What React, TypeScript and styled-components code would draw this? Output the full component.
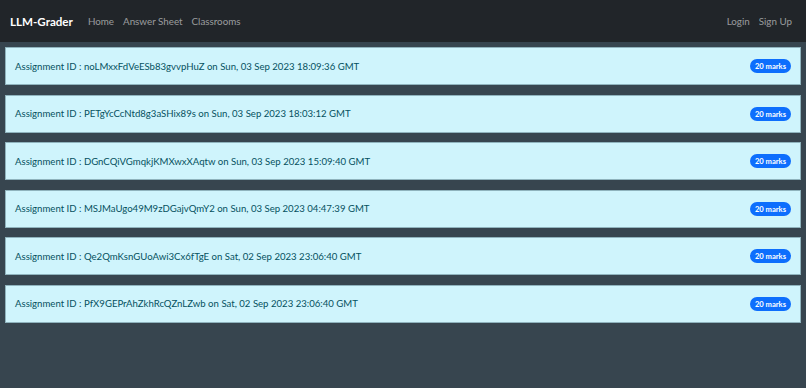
import React from "react";
import styled, { createGlobalStyle } from "styled-components";

const Global = createGlobalStyle`
  html, body { margin: 0; padding: 0; }
  body {
    background: #37454f;
    font-family: Lato, "Noto Sans", sans-serif;
    min-height: 388px;
  }
`;

const Nav = styled.nav`
  height: 42px;
  background: #212529;
  display: flex;
  align-items: center;
  padding: 0 14px 0 10px;
  box-sizing: border-box;
`;

const Brand = styled.span`
  color: #fff;
  font-weight: 700;
  font-size: 11.6px;
  margin-right: 15px;
`;

const NavLink = styled.span<{ $last?: boolean }>`
  color: rgba(255, 255, 255, 0.55);
  font-size: 9.8px;
  margin-right: ${(p) => (p.$last ? "0" : "9px")};
`;

const Spacer = styled.div`
  flex: 1;
`;

const List = styled.div`
  display: flex;
  flex-direction: column;
  gap: 9.5px;
  padding: 5px 5px;
`;

const Card = styled.div`
  height: 38px;
  box-sizing: border-box;
  background: #cff4fc;
  border: 1px solid #8fb3bd;
  display: flex;
  align-items: center;
  padding: 0 9px 0 9px;
`;

const Title = styled.span`
  color: #055160;
  font-size: 9.6px;
  flex: 1;
`;

const Badge = styled.span`
  background: #0d6efd;
  color: #fff;
  font-weight: 700;
  font-size: 7.6px;
  border-radius: 7px;
  padding: 2px 5px;
  line-height: 10px;
`;

const items = [
  ["noLMxxFdVeESb83gvvpHuZ", "Sun, 03 Sep 2023 18:09:36 GMT"],
  ["PETgYcCcNtd8g3aSHix89s", "Sun, 03 Sep 2023 18:03:12 GMT"],
  ["DGnCQiVGmqkjKMXwxXAqtw", "Sun, 03 Sep 2023 15:09:40 GMT"],
  ["MSJMaUgo49M9zDGajvQmY2", "Sun, 03 Sep 2023 04:47:39 GMT"],
  ["Qe2QmKsnGUoAwi3Cx6fTgE", "Sat, 02 Sep 2023 23:06:40 GMT"],
  ["PfX9GEPrAhZkhRcQZnLZwb", "Sat, 02 Sep 2023 23:06:40 GMT"],
];

export default function App() {
  return (
    <>
      <Global />
      <Nav>
        <Brand>LLM-Grader</Brand>
        <NavLink>Home</NavLink>
        <NavLink>Answer Sheet</NavLink>
        <NavLink>Classrooms</NavLink>
        <Spacer />
        <NavLink>Login</NavLink>
        <NavLink $last>Sign Up</NavLink>
      </Nav>
      <List>
        {items.map(([id, date]) => (
          <Card key={id}>
            <Title>
              Assignment ID : {id} on {date}
            </Title>
            <Badge>20 marks</Badge>
          </Card>
        ))}
      </List>
    </>
  );
}
